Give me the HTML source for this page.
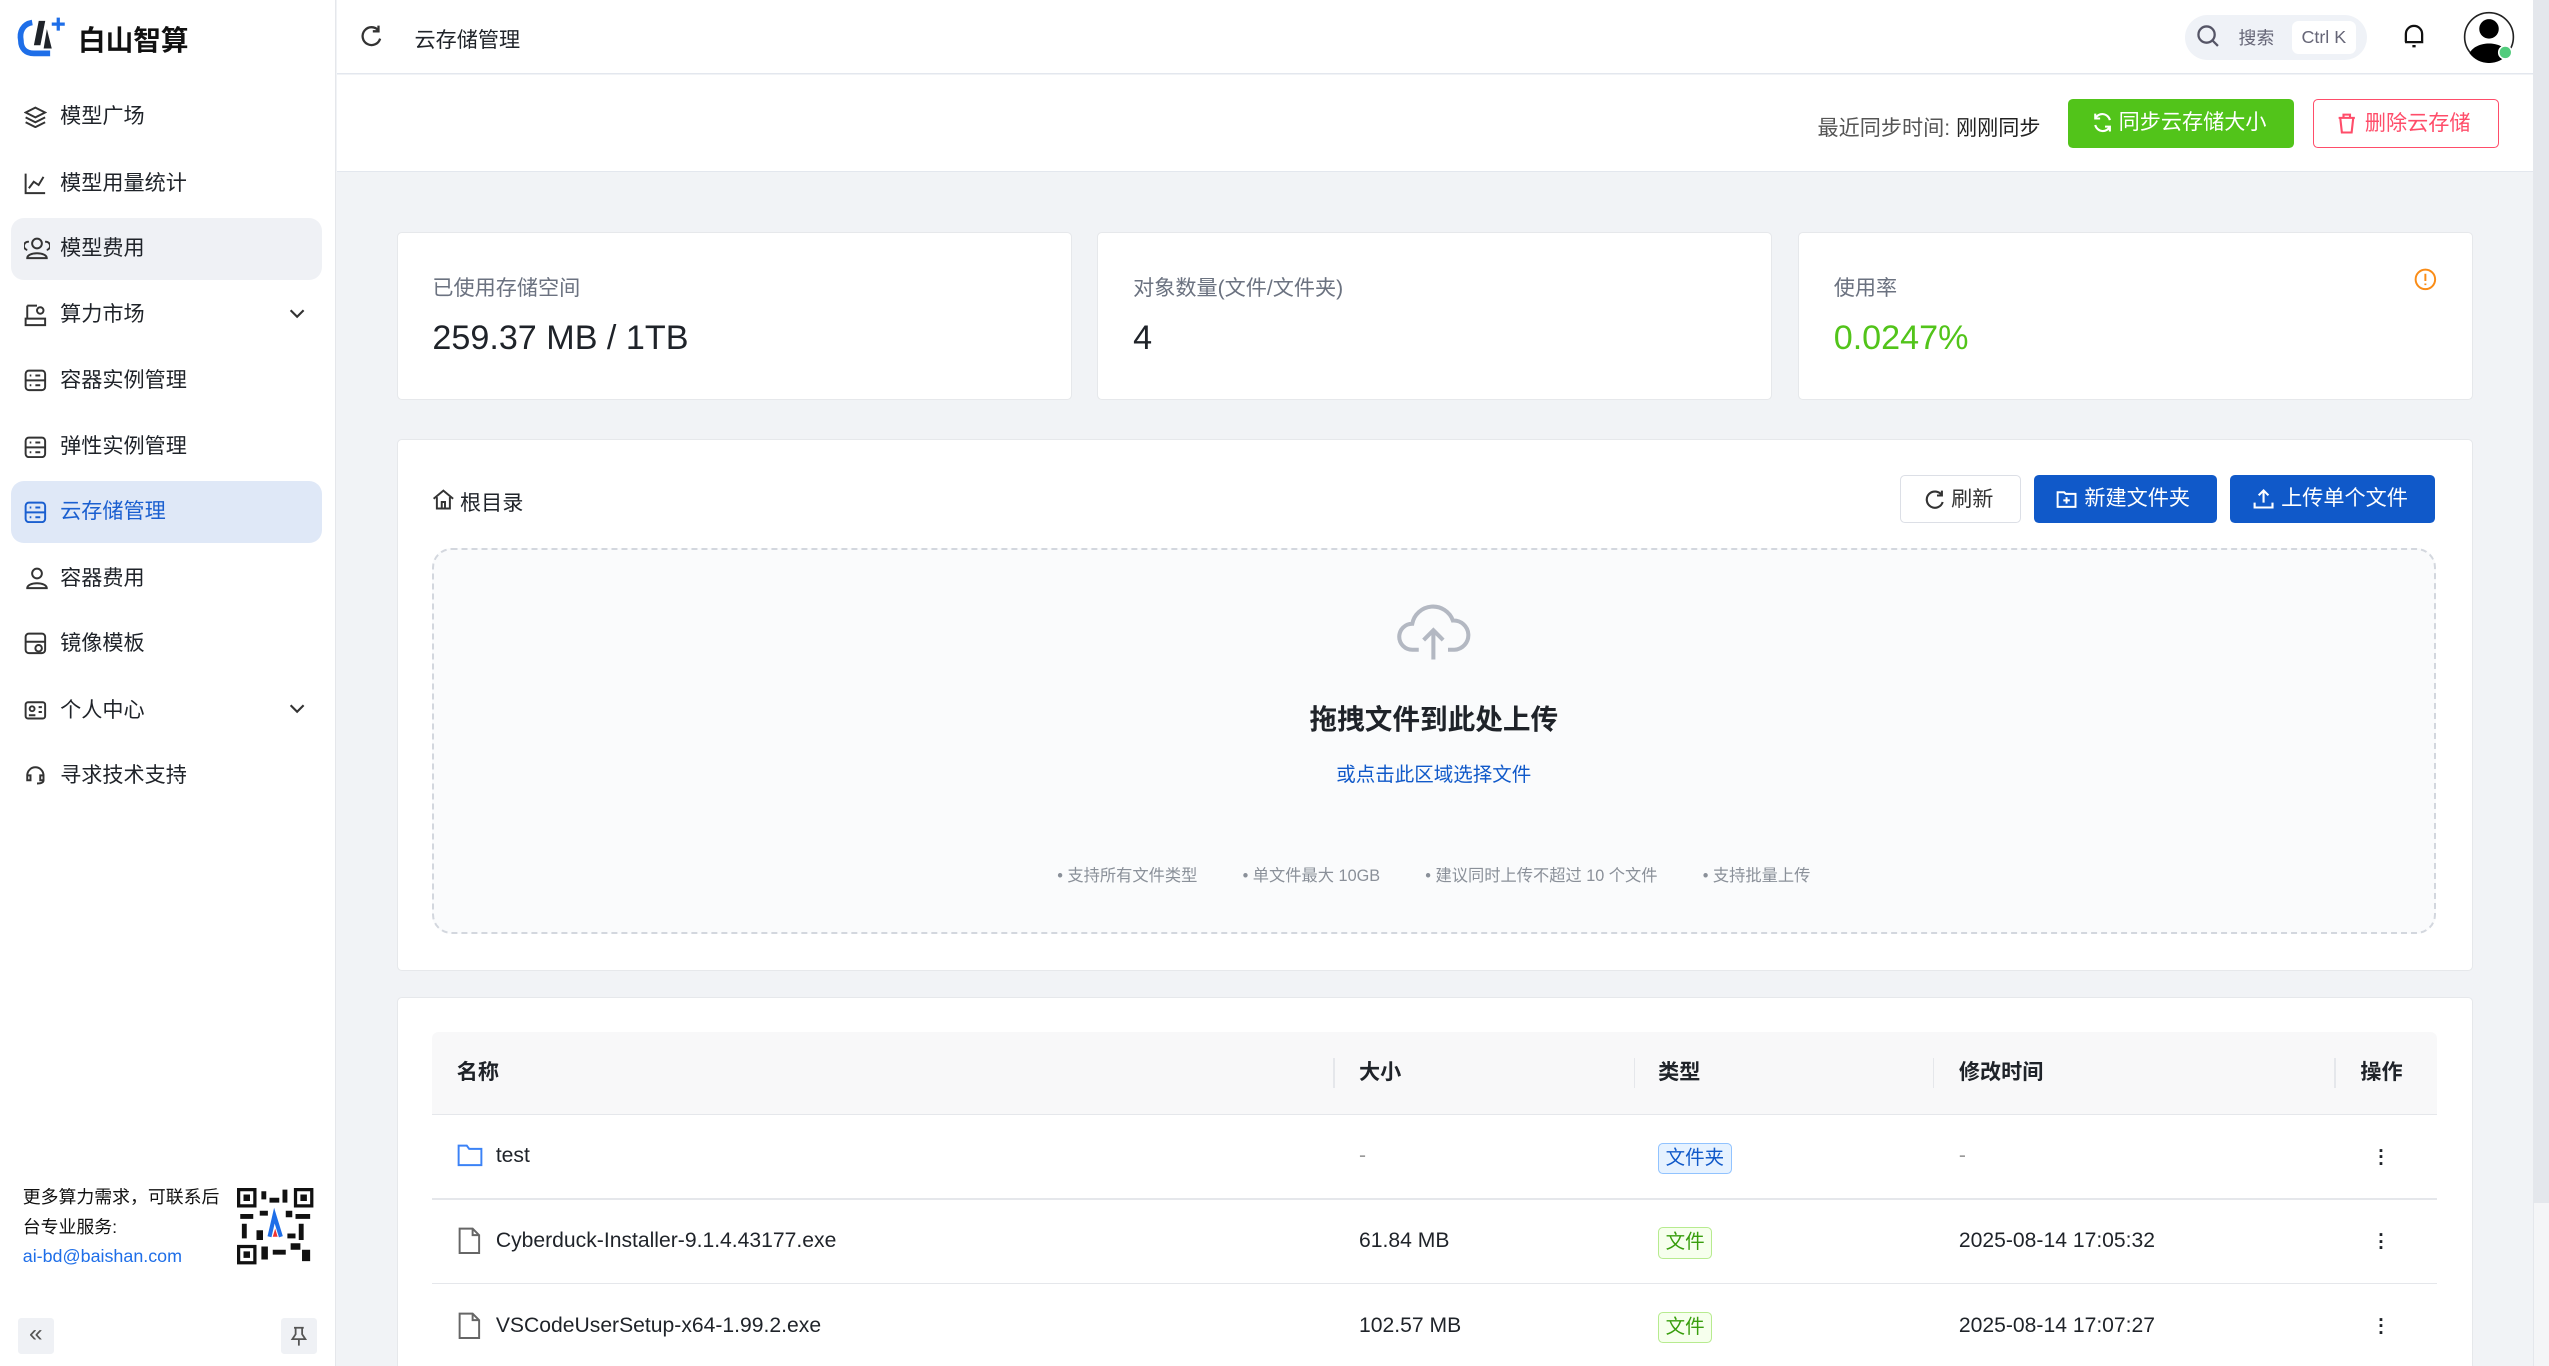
<!DOCTYPE html>
<html><head><meta charset="utf-8"><style>
html,body{margin:0;padding:0;overflow:hidden;}
body{width:2549px;height:1366px;background:#f1f3f6;font-family:"Liberation Sans","Noto Sans CJK SC",sans-serif;color:#1f2329;}
#root{zoom:1.62564;width:1568px;height:841px;position:relative;overflow:hidden;}
.abs{position:absolute;}
.side{left:0;top:0;width:206px;height:841px;background:#fff;border-right:1px solid #e5e7eb;}
.nav{position:absolute;left:7px;width:191px;height:38px;border-radius:8px;font-size:13px;line-height:38px;color:#1f2329;}
.nav span{position:absolute;left:30px;}
.nav svg{position:absolute;left:8px;top:12px;}
.nav .chev{left:auto;right:10px;top:14px;}
.card{background:#fff;border:1px solid #e6e8eb;border-radius:3px;}
.lbl{font-size:13px;color:#6b7280;}
.btn{position:absolute;height:30px;border-radius:3px;font-size:13px;line-height:30px;text-align:center;box-sizing:border-box;}
.th{position:absolute;top:0;height:50px;line-height:50px;font-size:13px;font-weight:bold;color:#1f2329;}
.sep{position:absolute;top:16px;width:1px;height:18px;background:#e5e7eb;}
.td{position:absolute;font-size:13px;color:#1f2329;}
.tag{position:absolute;font-size:12px;height:18px;line-height:18px;padding:0 4px;border-radius:3px;}
</style></head><body><div id="root">
<!-- sidebar -->
<div class="abs side">
 <svg class="abs" style="left:10px;top:10px" width="32" height="26" viewBox="0 0 32 26"><path d="M10 4 C4 5 2 10 3 15 C3 20 6 23 11 23 L21 23" stroke="#1e6ee8" stroke-width="3.5" fill="none"/><path d="M14 3 L11 18 L15 18 L18 3Z" fill="#1f2329"/><path d="M19 8 L22 20 L17 20Z" fill="#1f2329"/><path d="M26 1 V9 M22 5 H30" stroke="#1e6ee8" stroke-width="2"/></svg>
 <div class="abs" style="left:48px;top:11px;font-size:17px;font-weight:bold;color:#111">白山智算</div>
 <div class="nav" style="top:53px"><svg width="14" height="14" viewBox="0 0 14 14" fill="none" stroke="#333" stroke-width="1.2"><path d="M7 1L13 4L7 7L1 4Z M1 7L7 10L13 7 M1 10L7 13L13 10"/></svg><span>模型广场</span></div>
 <div class="nav" style="top:94px"><svg width="14" height="14" viewBox="0 0 14 14" fill="none" stroke="#333" stroke-width="1.2"><path d="M1 1V13H13 M3 10L6 6L9 8L12 3"/></svg><span>模型用量统计</span></div>
 <div class="nav" style="top:134px;background:#eff1f5"><svg width="16" height="14" viewBox="0 0 16 14" fill="none" stroke="#333" stroke-width="1.2"><circle cx="8" cy="4" r="3"/><path d="M2 13C2 9 14 9 14 13Z M3 3A2 2 0 0 0 2 8 M13 3A2 2 0 0 1 14 8"/></svg><span>模型费用</span></div>
 <div class="nav" style="top:175px"><svg width="14" height="14" viewBox="0 0 14 14" fill="none" stroke="#333" stroke-width="1.2"><path d="M2 1H8 M2 1V9 M1 9H13V13H1Z"/><circle cx="10" cy="4" r="2"/></svg><span>算力市场</span><svg class="chev" width="10" height="8" viewBox="0 0 10 8"><path d="M1 2L5 6L9 2" stroke="#333" stroke-width="1.3" fill="none"/></svg></div>
 <div class="nav" style="top:215px"><svg width="14" height="14" viewBox="0 0 14 14" fill="none" stroke="#333" stroke-width="1.2"><rect x="1" y="1" width="12" height="12" rx="2"/><path d="M1 7H13 M3.5 4H4.5 M3.5 10H4.5 M7 4H10 M7 10H10"/></svg><span>容器实例管理</span></div>
 <div class="nav" style="top:256px"><svg width="14" height="14" viewBox="0 0 14 14" fill="none" stroke="#333" stroke-width="1.2"><rect x="1" y="1" width="12" height="12" rx="2"/><path d="M1 7H13 M3.5 4H4.5 M3.5 10H4.5 M7 4H10 M7 10H10"/></svg><span>弹性实例管理</span></div>
 <div class="nav" style="top:296px;background:#dfe8f7;color:#1a5fd0"><svg width="14" height="14" viewBox="0 0 14 14" fill="none" stroke="#1a5fd0" stroke-width="1.2"><rect x="1" y="1" width="12" height="12" rx="2"/><path d="M1 7H13 M3.5 4H4.5 M3.5 10H4.5 M7 4H10 M7 10H10"/></svg><span>云存储管理</span></div>
 <div class="nav" style="top:337px"><svg width="16" height="14" viewBox="0 0 16 14" fill="none" stroke="#333" stroke-width="1.2"><circle cx="8" cy="4" r="3"/><path d="M2 13C2 9 14 9 14 13Z"/></svg><span>容器费用</span></div>
 <div class="nav" style="top:377px"><svg width="14" height="14" viewBox="0 0 14 14" fill="none" stroke="#333" stroke-width="1.2"><rect x="1" y="1" width="12" height="12" rx="2"/><path d="M1 6H13"/><circle cx="9" cy="10" r="2"/></svg><span>镜像模板</span></div>
 <div class="nav" style="top:418px"><svg width="14" height="14" viewBox="0 0 14 14" fill="none" stroke="#333" stroke-width="1.2"><rect x="1" y="2" width="12" height="10" rx="1.5"/><circle cx="5" cy="6" r="1.5"/><path d="M3 10H7 M9 5H11 M9 8H11"/></svg><span>个人中心</span><svg class="chev" width="10" height="8" viewBox="0 0 10 8"><path d="M1 2L5 6L9 2" stroke="#333" stroke-width="1.3" fill="none"/></svg></div>
 <div class="nav" style="top:458px"><svg width="14" height="14" viewBox="0 0 14 14" fill="none" stroke="#333" stroke-width="1.2"><path d="M2 9V7A5 5 0 0 1 12 7V9 M2 7H4V10H2Z M10 7H12V10H10Z M12 10Q12 12 8 12"/></svg><span>寻求技术支持</span></div>
 <div class="abs" style="left:14px;top:728px;font-size:11px;line-height:18px;color:#111;width:125px">更多算力需求，可联系后台专业服务:<br><span style="color:#1e6ee8">ai-bd@baishan.com</span></div>
 <svg class="abs" style="left:146px;top:731px" width="47" height="47" viewBox="0 0 47 47"><rect width="47" height="47" fill="#fff"/><g fill="#111"><rect x="0" y="0" width="12" height="12"/><rect x="35" y="0" width="12" height="12"/><rect x="0" y="35" width="12" height="12"/></g><g fill="#fff"><rect x="2" y="2" width="8" height="8"/><rect x="37" y="2" width="8" height="8"/><rect x="2" y="37" width="8" height="8"/></g><g fill="#111"><rect x="4" y="4" width="4" height="4"/><rect x="39" y="4" width="4" height="4"/><rect x="4" y="39" width="4" height="4"/><rect x="15" y="2" width="3" height="5"/><rect x="20" y="6" width="6" height="3"/><rect x="28" y="1" width="3" height="8"/><rect x="14" y="14" width="5" height="3"/><rect x="2" y="16" width="8" height="3"/><rect x="3" y="22" width="3" height="9"/><rect x="36" y="16" width="9" height="3"/><rect x="38" y="22" width="3" height="10"/><rect x="15" y="36" width="4" height="8"/><rect x="22" y="38" width="8" height="3"/><rect x="33" y="34" width="6" height="4"/><rect x="40" y="38" width="5" height="7"/><rect x="30" y="14" width="4" height="4"/><rect x="12" y="26" width="4" height="6"/><rect x="31" y="28" width="5" height="3"/></g><path d="M20 30L23 17L27 30" stroke="#1e6ee8" stroke-width="2.5" fill="none"/><path d="M22 30L23.5 25L25 30Z" fill="#e33"/></svg>
 <div class="abs" style="left:11px;top:811px;width:22px;height:22px;background:#eff1f5;border-radius:2px;text-align:center;line-height:20px;font-size:15px;color:#555">«</div>
 <div class="abs" style="left:173px;top:811px;width:22px;height:22px;background:#eff1f5;border-radius:2px"><svg width="22" height="22" viewBox="0 0 22 22" fill="none" stroke="#555" stroke-width="1.1"><path d="M8 6H14 M9 6V10L7 13H15L13 10V6 M11 13V17"/></svg></div>
</div>
<!-- header -->
<div class="abs" style="left:207px;top:0;width:1351px;height:45px;background:#fff;border-bottom:1px solid #e3e7ee"></div>
<svg class="abs" style="left:221px;top:15px" width="15" height="15" viewBox="0 0 15 15" fill="none" stroke="#333" stroke-width="1.4"><path d="M12 4A5.5 5.5 0 1 0 13 9 M12 1V4.5H8.5"/></svg>
<div class="abs" style="left:255px;top:14px;font-size:13px">云存储管理</div>
<div class="abs" style="left:1344px;top:9px;width:112px;height:28px;background:#eff2f7;border-radius:14px"></div>
<svg class="abs" style="left:1351px;top:15px" width="15" height="15" viewBox="0 0 15 15" fill="none" stroke="#556" stroke-width="1.4"><circle cx="6.5" cy="6.5" r="5"/><path d="M10 10L13.5 13.5"/></svg>
<div class="abs" style="left:1377px;top:15px;font-size:11px;color:#667">搜索</div>
<div class="abs" style="left:1410px;top:13px;width:39px;height:20px;background:#fff;border-radius:4px;font-size:11px;line-height:20px;text-align:center;color:#667">Ctrl K</div>
<svg class="abs" style="left:1477px;top:13px" width="16" height="18" viewBox="0 0 16 18" fill="none" stroke="#111" stroke-width="1.4"><path d="M3 13V8A5 5 0 0 1 13 8V13H2.5H13.5 M7 15.5H9"/></svg>
<svg class="abs" style="left:1515px;top:7px" width="32" height="32" viewBox="0 0 32 32"><circle cx="16" cy="16" r="15" fill="#fff" stroke="#222" stroke-width="1"/><circle cx="16" cy="11" r="6" fill="#000"/><path d="M4 26C8 18 24 18 28 26A15 15 0 0 1 4 26Z" fill="#000"/><circle cx="26" cy="25.5" r="4" fill="#52cc7d" stroke="#fff" stroke-width="1"/></svg>
<!-- toolbar row -->
<div class="abs" style="left:207px;top:46px;width:1351px;height:59px;background:#fff;border-bottom:1px solid #e3e7ee"></div>
<div class="abs" style="left:1118px;top:68px;font-size:13px;color:#555">最近同步时间: <span style="color:#222">刚刚同步</span></div>
<div class="btn" style="left:1272px;top:61px;width:139px;background:#52c41a;color:#fff">&nbsp;&nbsp;&nbsp;&nbsp;同步云存储大小<svg class="abs" style="left:15px;top:8px" width="13" height="13" viewBox="0 0 13 13" fill="none" stroke="#fff" stroke-width="1.3"><path d="M11 5A4.8 4.8 0 0 0 2 4 M2 8A4.8 4.8 0 0 0 11 9 M2 1V4H5 M11 12V9H8"/></svg></div>
<div class="btn" style="left:1423px;top:61px;width:114px;border:1px solid #ff4d6a;color:#ff4d6a;background:#fff">&nbsp;&nbsp;&nbsp;&nbsp;删除云存储<svg class="abs" style="left:14px;top:8px" width="12" height="13" viewBox="0 0 12 13" fill="none" stroke="#ff4d6a" stroke-width="1.3"><path d="M1 3H11 M4 3V1H8V3 M2 3L3 12H9L10 3"/></svg></div>
<!-- stat cards -->
<div class="abs card" style="left:244px;top:143px;width:414px;height:102px"></div>
<div class="abs lbl" style="left:266px;top:167px">已使用存储空间</div>
<div class="abs" style="left:266px;top:196px;font-size:21px;color:#1f2329">259.37 MB / 1TB</div>
<div class="abs card" style="left:675px;top:143px;width:414px;height:102px"></div>
<div class="abs lbl" style="left:697px;top:167px">对象数量(文件/文件夹)</div>
<div class="abs" style="left:697px;top:196px;font-size:21px">4</div>
<div class="abs card" style="left:1106px;top:143px;width:414px;height:102px"></div>
<div class="abs lbl" style="left:1128px;top:167px">使用率</div>
<div class="abs" style="left:1128px;top:196px;font-size:21px;color:#52c41a">0.0247%</div>
<svg class="abs" style="left:1485px;top:165px" width="14" height="14" viewBox="0 0 14 14" fill="none" stroke="#fa8c16" stroke-width="1.2"><circle cx="7" cy="7" r="6"/><path d="M7 3.5V8 M7 9.5V10.5"/></svg>
<!-- upload card -->
<div class="abs card" style="left:244px;top:270px;width:1276px;height:326px"></div>
<svg class="abs" style="left:266px;top:301px" width="14" height="13" viewBox="0 0 14 13" fill="none" stroke="#333" stroke-width="1.2"><path d="M1 6L7 1L13 6 M3 5V12H11V5 M6 12V8H8V12"/></svg>
<div class="abs" style="left:283px;top:299px;font-size:13px">根目录</div>
<div class="btn" style="left:1169px;top:292px;width:74px;border:1px solid #dcdfe6;background:#fff;color:#333">&nbsp;&nbsp;&nbsp;&nbsp;刷新<svg class="abs" style="left:14px;top:8px" width="13" height="13" viewBox="0 0 13 13" fill="none" stroke="#333" stroke-width="1.3"><path d="M11 4A5 5 0 1 0 11.5 8 M11 1V4H8"/></svg></div>
<div class="btn" style="left:1251px;top:292px;width:113px;background:#1059c9;color:#fff">&nbsp;&nbsp;&nbsp;&nbsp;新建文件夹<svg class="abs" style="left:14px;top:9px" width="13" height="12" viewBox="0 0 13 12" fill="none" stroke="#fff" stroke-width="1.2"><path d="M1 2H5L6 3H12V11H1Z M6.5 5V9 M4.5 7H8.5"/></svg></div>
<div class="btn" style="left:1372px;top:292px;width:126px;background:#1059c9;color:#fff">&nbsp;&nbsp;&nbsp;&nbsp;上传单个文件<svg class="abs" style="left:14px;top:8px" width="13" height="13" viewBox="0 0 13 13" fill="none" stroke="#fff" stroke-width="1.3"><path d="M6.5 9V1.5 M3.5 4.5L6.5 1.5L9.5 4.5 M1 9V12H12V9"/></svg></div>
<div class="abs" style="left:266px;top:337px;width:1230px;height:235px;border:1.5px dashed #d3d7de;border-radius:12px;background:#fafbfc"></div>
<svg class="abs" style="left:859px;top:370px" width="46" height="38" viewBox="0 0 46 38" fill="none" stroke="#b3b8c2" stroke-width="2.5"><path d="M14 30H10A8 8 0 0 1 10 14A13 13 0 0 1 35 12A9 9 0 0 1 36 30H32 M23 36V18 M17 24L23 18L29 24"/></svg>
<div class="abs" style="left:0;width:1764px;top:429px;text-align:center;font-size:17px;font-weight:bold;color:#1f2329">拖拽文件到此处上传</div>
<div class="abs" style="left:0;width:1764px;top:466px;text-align:center;font-size:12px;color:#1059c9">或点击此区域选择文件</div>
<div class="abs" style="left:0;width:1764px;top:530px;text-align:center;font-size:10px;color:#8a9099;word-spacing:0">• 支持所有文件类型 &nbsp;&nbsp;&nbsp;&nbsp;&nbsp;&nbsp;&nbsp;&nbsp; • 单文件最大 10GB &nbsp;&nbsp;&nbsp;&nbsp;&nbsp;&nbsp;&nbsp;&nbsp; • 建议同时上传不超过 10 个文件 &nbsp;&nbsp;&nbsp;&nbsp;&nbsp;&nbsp;&nbsp;&nbsp; • 支持批量上传</div>
<!-- table card -->
<div class="abs card" style="left:244px;top:613px;width:1276px;height:240px"></div>
<div class="abs" style="left:266px;top:635px;width:1233px;height:50px;background:#f8f8f9;border-bottom:1px solid #e5e7eb;border-radius:4px 4px 0 0">
 <div class="th" style="left:15px">名称</div><div class="sep" style="left:554px"></div>
 <div class="th" style="left:570px">大小</div><div class="sep" style="left:739px"></div>
 <div class="th" style="left:754px">类型</div><div class="sep" style="left:923px"></div>
 <div class="th" style="left:939px">修改时间</div><div class="sep" style="left:1170px"></div>
 <div class="th" style="left:1186px">操作</div>
</div>
<div class="abs" style="left:266px;top:737px;width:1233px;height:1px;background:#e5e7eb"></div>
<div class="abs" style="left:266px;top:789px;width:1233px;height:1px;background:#e5e7eb"></div>
<svg class="abs" style="left:281px;top:704px" width="16" height="14" viewBox="0 0 16 14" fill="none" stroke="#3b82f6" stroke-width="1.2"><path d="M1 1H6L7.5 3H15V13H1Z"/></svg>
<div class="td" style="left:305px;top:704px">test</div>
<div class="td" style="left:836px;top:704px;color:#999">-</div>
<div class="tag" style="left:1020px;top:703px;background:#e6f2ff;border:1px solid #91c3ff;color:#1059c9">文件夹</div>
<div class="td" style="left:1205px;top:704px;color:#999">-</div>
<svg class="abs" style="left:282px;top:755px" width="14" height="17" viewBox="0 0 14 17" fill="none" stroke="#666" stroke-width="1.2"><path d="M1 1H9L13 5V16H1Z M9 1V5H13"/></svg>
<div class="td" style="left:305px;top:756px">Cyberduck-Installer-9.1.4.43177.exe</div>
<div class="td" style="left:836px;top:756px">61.84 MB</div>
<div class="tag" style="left:1020px;top:755px;background:#f6ffed;border:1px solid #b7eb8f;color:#389e0d">文件</div>
<div class="td" style="left:1205px;top:756px">2025-08-14 17:05:32</div>
<svg class="abs" style="left:282px;top:807px" width="14" height="17" viewBox="0 0 14 17" fill="none" stroke="#666" stroke-width="1.2"><path d="M1 1H9L13 5V16H1Z M9 1V5H13"/></svg>
<div class="td" style="left:305px;top:808px">VSCodeUserSetup-x64-1.99.2.exe</div>
<div class="td" style="left:836px;top:808px">102.57 MB</div>
<div class="tag" style="left:1020px;top:807px;background:#f6ffed;border:1px solid #b7eb8f;color:#389e0d">文件</div>
<div class="td" style="left:1205px;top:808px">2025-08-14 17:07:27</div>
<div class="td" style="left:1463px;top:706px;font-weight:bold;line-height:4px;font-size:12px">·<br>·<br>·</div>
<div class="td" style="left:1463px;top:758px;font-weight:bold;line-height:4px;font-size:12px">·<br>·<br>·</div>
<div class="td" style="left:1463px;top:810px;font-weight:bold;line-height:4px;font-size:12px">·<br>·<br>·</div>
<!-- scrollbar -->
<div class="abs" style="left:1558px;top:0;width:10px;height:841px;background:#e4e7ec"></div>
<div class="abs" style="left:1559px;top:740px;width:9px;height:101px;background:#f4f5f7"></div>
</div></body></html>
